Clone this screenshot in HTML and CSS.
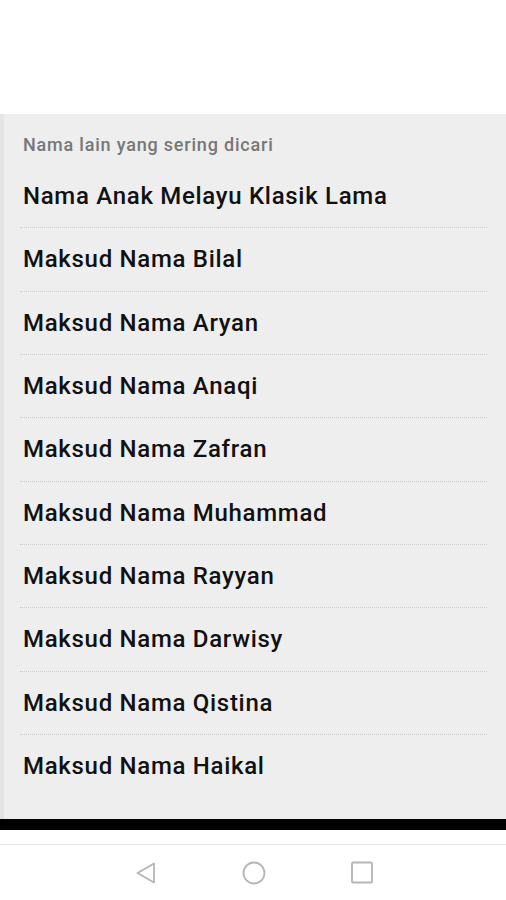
FILE: index.html
```html
<!DOCTYPE html>
<html>
<head>
    <title>Nama lain</title>
    <link rel="stylesheet" href="styles.css">
</head>
<body>
    <div class="top-space"></div>

    <div class="panel">
        <div class="panel-title">Nama lain yang sering dicari</div>
        <ul class="name-list">
            <li>Nama Anak Melayu Klasik Lama</li>
            <li>Maksud Nama Bilal</li>
            <li>Maksud Nama Aryan</li>
            <li>Maksud Nama Anaqi</li>
            <li>Maksud Nama Zafran</li>
            <li>Maksud Nama Muhammad</li>
            <li>Maksud Nama Rayyan</li>
            <li>Maksud Nama Darwisy</li>
            <li>Maksud Nama Qistina</li>
            <li>Maksud Nama Haikal</li>
        </ul>
    </div>

    <div class="black-bar"></div>

    <div class="nav-bar">
        <svg class="nav-icon" width="24" height="24" viewBox="0 0 24 24">
            <path d="M20 2.5 L3.5 12 L20 21.5 Z" fill="none" stroke="#b5b5b5" stroke-width="1.8" stroke-linejoin="round"/>
        </svg>
        <svg class="nav-icon" width="24" height="24" viewBox="0 0 24 24">
            <circle cx="12" cy="12" r="10.5" fill="none" stroke="#b5b5b5" stroke-width="1.8"/>
        </svg>
        <svg class="nav-icon" width="24" height="24" viewBox="0 0 24 24">
            <rect x="2" y="1.5" width="20" height="20" rx="1" fill="none" stroke="#b5b5b5" stroke-width="1.8"/>
        </svg>
    </div>
</body>
</html>
```

FILE: styles.css
```css
body {
    margin: 0;
    padding: 0;
    background-color: #ffffff;
    font-family: Roboto, "Liberation Sans", sans-serif;
}
.top-space {
    height: 114px;
}
.panel {
    background-color: #eeeeee;
    border-left: 4px solid #e4e4e4;
    padding: 20px 19px 22px 16px;
    height: 663px;
}
.panel-title {
    padding-left: 3px;
    font-size: 18px;
    font-weight: 500;
    letter-spacing: 0.8px;
    line-height: 22px;
    color: #777777;
    margin-bottom: 9px;
}
.name-list {
    list-style: none;
    margin: 0;
    padding: 0;
}
.name-list li {
    height: 62.33px;
    line-height: 62.33px;
    padding-left: 3px;
    font-size: 24px;
    font-weight: 500;
    letter-spacing: 0.7px;
    color: #111111;
    border-bottom: 1px dotted #c9c9c9;
}
.name-list li:last-child {
    border-bottom: none;
}
.black-bar {
    height: 11px;
    background-color: #000000;
}
.nav-bar {
    margin-top: 14px;
    border-top: 1px solid #e2e2e2;
    height: 55px;
    display: flex;
    justify-content: center;
    align-items: center;
    gap: 84px;
    padding-left: 1px;
}
.nav-icon {
    display: block;
}
```
